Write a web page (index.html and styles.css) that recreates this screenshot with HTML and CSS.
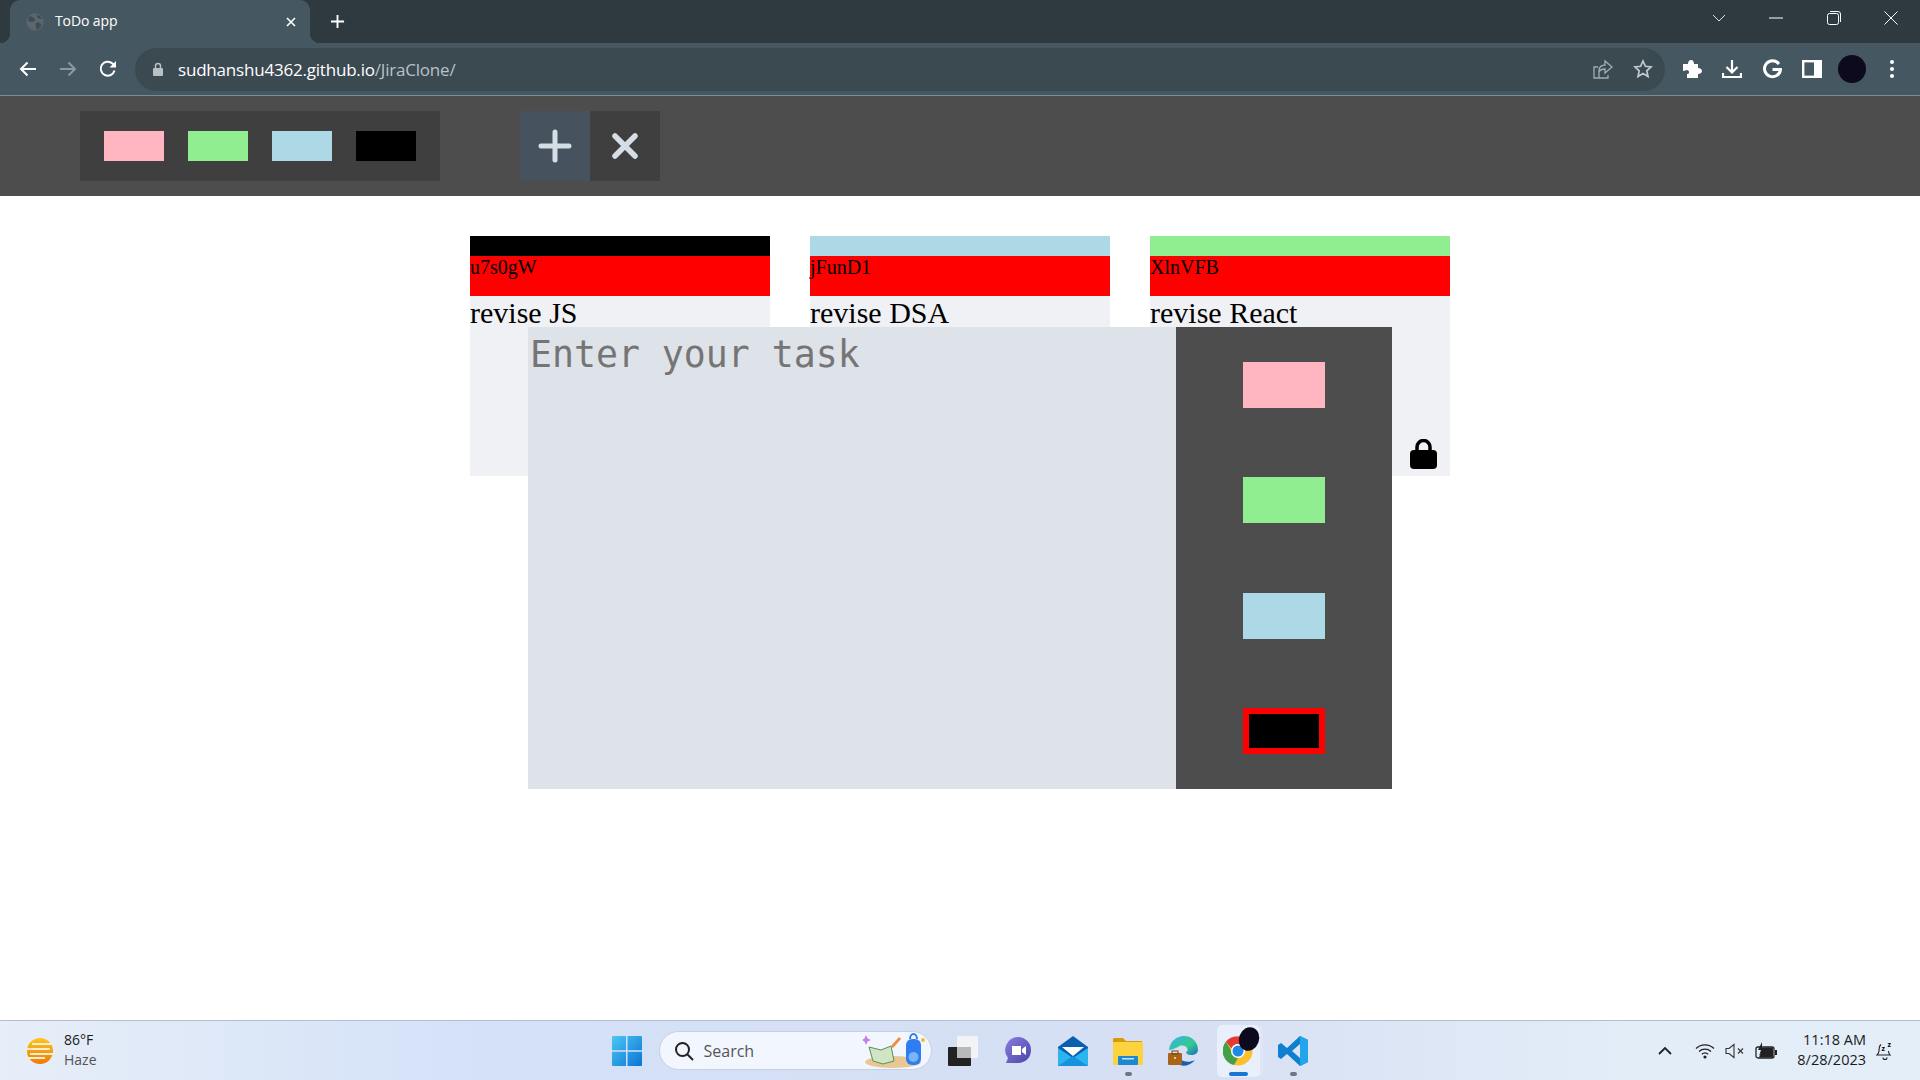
FILE: index.html
```html
<!DOCTYPE html>
<html lang="en">
  <head>
    <meta charset="UTF-8" />
    <meta name="viewport" content="width=device-width, initial-scale=1.0" />
    <title>ToDo app</title>
    <link rel="stylesheet" href="styles.css">
  </head>
  <body>
    <!-- Browser chrome -->
    <div class="tab-strip">
      <div class="tab">
        <svg class="favicon" viewBox="0 0 18 18"><circle cx="9" cy="9" r="8.5" fill="#5b676e"/><path d="M4 3c2 1 4 1 5 3S7 9 5 9 2 7 2 6zM10 10c2-1 4 0 5 1s-1 4-3 5-2-1-2-2-1-3 0-4zM11 2c2 0 4 2 5 4-2 0-3 0-4-1s-2-2-1-3z" fill="#3f4c54"/></svg>
        <span class="tab-title">ToDo app</span>
        <svg class="tab-close" viewBox="0 0 12 12"><path d="M2 2l8 8M10 2l-8 8" stroke="#fff" stroke-width="1.6"/></svg>
      </div>
      <svg class="new-tab" viewBox="0 0 16 16"><path d="M8 1v14M1 8h14" stroke="#fff" stroke-width="2"/></svg>
      <div class="window-controls">
        <span class="win-btn"><svg viewBox="0 0 14 8" width="14" height="8"><path d="M1 1l6 6 6-6" fill="none" stroke="#dfe3e5"/></svg></span>
        <span class="win-btn"><svg viewBox="0 0 14 2" width="14" height="2"><path d="M0 1h14" stroke="#fff"/></svg></span>
        <span class="win-btn"><svg viewBox="0 0 14 14" width="14" height="14"><rect x=".5" y="2.5" width="11" height="11" rx="2" fill="none" stroke="#fff"/><path d="M3 .5h8a2.500 2.500 0 0 1 2.500 2.500v8" fill="none" stroke="#fff"/></svg></span>
        <span class="win-btn"><svg viewBox="0 0 14 14" width="14" height="14"><path d="M.5.5l13 13M13.500.5l-13 13" stroke="#fff"/></svg></span>
      </div>
    </div>

    <div class="toolbar">
      <span class="tool-btn"><svg viewBox="0 0 18 16" width="18" height="16"><path d="M17 8H2M8.500 1.500L2 8l6.500 6.500" fill="none" stroke="#fff" stroke-width="2"/></svg></span>
      <span class="tool-btn"><svg viewBox="0 0 18 16" width="18" height="16"><path d="M1 8h15M9.500 1.500L16 8l-6.500 6.500" fill="none" stroke="#8b989f" stroke-width="2"/></svg></span>
      <span class="tool-btn"><svg viewBox="0 0 18 18" width="18" height="18"><path d="M15.500 10.500A7 7 0 1 1 13.500 3.500L16 6" fill="none" stroke="#fff" stroke-width="2"/><path d="M17 1v6.500h-6.500z" fill="#fff"/></svg></span>

      <div class="address-bar">
        <svg class="addr-lock" viewBox="0 0 12 14" width="12" height="14"><path d="M3.500 6V4a2.500 2.500 0 0 1 5 0v2" fill="none" stroke="#b9c0c4" stroke-width="1.500"/><rect x="1" y="6" width="10" height="8" rx="1" fill="#b9c0c4"/></svg>
        <span class="url"><span class="url-host">sudhanshu4362.github.io</span>/JiraClone/</span>
        <span class="addr-icon share"><svg viewBox="0 0 20 20" width="20" height="20"><path d="M6 19V11c0-3 3-5 6-5V2l7 6-7 6v-4c-3 0-5 1-6 3" fill="none" stroke="#a3acb1" stroke-width="1.300"/><path d="M5 8H1v11h14v-3" fill="none" stroke="#a3acb1" stroke-width="1.300"/></svg></span>
        <span class="addr-icon"><svg viewBox="0 0 20 20" width="20" height="20"><path d="M10 2l2.400 5.300 5.600.6-4.200 3.900 1.200 5.700L10 14.600 5 17.500l1.200-5.700L2 7.900l5.600-.6z" fill="none" stroke="#c3c9cc" stroke-width="1.700"/></svg></span>
      </div>

      <span class="tool-btn"><svg viewBox="0 0 20 20" width="20" height="20"><path d="M1 5h5c0-2 1-4 3-4s3 2 3 4h4v4c2 0 4 1 4 3s-2 3-4 3v4H5v-4c2 0 2-1 2-2s-1-2-2-2-2 1-4 1z" fill="#fff"/></svg></span>
      <span class="tool-btn"><svg viewBox="0 0 20 20" width="20" height="20"><path d="M10 1v12M4.500 8L10 13.500 15.500 8" fill="none" stroke="#fff" stroke-width="2.200"/><path d="M1 14v4h18v-4" fill="none" stroke="#fff" stroke-width="2.200"/></svg></span>
      <span class="tool-btn"><svg viewBox="0 0 20 20" width="20" height="20"><path d="M17 5a8 8 0 1 0 1.500 5.500H10.500" fill="none" stroke="#fff" stroke-width="3"/></svg></span>
      <span class="tool-btn"><svg viewBox="0 0 20 18" width="20" height="18"><rect x="1.200" y="1.200" width="17.600" height="15.600" fill="none" stroke="#fff" stroke-width="2.400"/><rect x="12" y="1" width="7" height="16" fill="#fff"/></svg></span>
      <span class="tool-btn"><span class="avatar"></span></span>
      <span class="tool-btn"><svg viewBox="0 0 6 20" width="6" height="20"><circle cx="3" cy="3" r="2" fill="#fff"/><circle cx="3" cy="10" r="2" fill="#fff"/><circle cx="3" cy="17" r="2" fill="#fff"/></svg></span>
    </div>

    <!-- The app -->
    <div class="page">
      <div class="app-header">
        <div class="palette">
          <div class="swatch pink"></div>
          <div class="swatch green"></div>
          <div class="swatch blue"></div>
          <div class="swatch black"></div>
        </div>
        <div class="actions">
          <div class="action add">
            <svg viewBox="0 0 34 34" width="34" height="34"><path d="M17 3v28M3 17h28" stroke="#d5dde5" stroke-width="5" stroke-linecap="round"/></svg>
          </div>
          <div class="action remove">
            <svg viewBox="0 0 28 28" width="28" height="28"><path d="M4 4l20 20M24 4L4 24" stroke="#d5dde5" stroke-width="5.500" stroke-linecap="round"/></svg>
          </div>
        </div>
      </div>

      <div class="tickets">
        <div class="ticket">
          <div class="ticket-color black"></div>
          <div class="ticket-id">u7s0gW</div>
          <div class="ticket-task">revise JS</div>
          <svg class="lock" viewBox="0 0 27 30" width="27" height="30"><path d="M7 14V8a6.500 6.500 0 0 1 13 0v6" fill="none" stroke="#000" stroke-width="3.500"/><rect y="11" width="27" height="19" rx="4"/></svg>
        </div>
        <div class="ticket">
          <div class="ticket-color blue"></div>
          <div class="ticket-id">jFunD1</div>
          <div class="ticket-task">revise DSA</div>
          <svg class="lock" viewBox="0 0 27 30" width="27" height="30"><path d="M7 14V8a6.500 6.500 0 0 1 13 0v6" fill="none" stroke="#000" stroke-width="3.500"/><rect y="11" width="27" height="19" rx="4"/></svg>
        </div>
        <div class="ticket">
          <div class="ticket-color green"></div>
          <div class="ticket-id">XlnVFB</div>
          <div class="ticket-task">revise React</div>
          <svg class="lock" viewBox="0 0 27 30" width="27" height="30"><path d="M7 14V8a6.500 6.500 0 0 1 13 0v6" fill="none" stroke="#000" stroke-width="3.500"/><rect y="11" width="27" height="19" rx="4"/></svg>
        </div>
      </div>

      <div class="modal">
        <textarea class="modal-input" placeholder="Enter your task"></textarea>
        <div class="modal-colors">
          <div class="modal-swatch pink"></div>
          <div class="modal-swatch green"></div>
          <div class="modal-swatch blue"></div>
          <div class="modal-swatch black active"></div>
        </div>
      </div>
    </div>

    <!-- Windows taskbar -->
    <div class="taskbar">
      <div class="weather">
        <svg viewBox="0 0 32 28" width="32" height="28">
          <defs><linearGradient id="sun" x1="0" y1="0" x2="0" y2="1"><stop offset="0" stop-color="#fdc51f"/><stop offset="1" stop-color="#ee7a06"/></linearGradient></defs>
          <circle cx="16" cy="14" r="13" fill="url(#sun)"/>
          <path d="M8 7h22M2 12h24M6 17h24M1 21h20" stroke="#f6ecd0" stroke-width="2"/>
        </svg>
        <div class="weather-text">
          <div class="temp">86°F</div>
          <div class="sky">Haze</div>
        </div>
      </div>

      <div class="task-icons">
        <svg class="start" viewBox="0 0 30 30" width="30" height="30">
          <defs><linearGradient id="win" x1="0" y1="0" x2="1" y2="1"><stop offset="0" stop-color="#4cc6f5"/><stop offset="1" stop-color="#0a74d4"/></linearGradient></defs>
          <path d="M0 1a1 1 0 0 1 1-1h13v14.300H0zM15.500 0H29a1 1 0 0 1 1 1v13.300H15.500zM0 15.700h14V30H1a1 1 0 0 1-1-1zM15.500 15.700H30V29a1 1 0 0 1-1 1H15.500z" fill="url(#win)"/>
        </svg>
        <div class="search">
          <svg viewBox="0 0 20 20" width="20" height="20"><circle cx="8.500" cy="8.500" r="6.500" fill="none" stroke="#222" stroke-width="2"/><path d="M13 13l6 6" stroke="#222" stroke-width="2"/></svg>
          <span class="search-text">Search</span>
          <svg class="search-art" viewBox="0 0 62 36" width="62" height="36">
            <ellipse cx="30" cy="29" rx="28" ry="6" fill="#e8c794"/>
            <path d="M6 14l12 3 10-4 3 15-11 3-10-3z" fill="#cfe5c4" stroke="#5c8f58"/>
            <path d="M28 13l8-9 2 2-8 9z" fill="#f08a3c"/>
            <rect x="43" y="6" width="15" height="26" rx="6" fill="#2f7df0"/>
            <path d="M47 6a3.500 5 0 0 1 7 0" fill="none" stroke="#2f7df0" stroke-width="2"/>
            <ellipse cx="50.500" cy="24" rx="5" ry="5" fill="#79b6f7"/>
            <path d="M3 2l1.500 3.500L8 7 4.500 8.500 3 12 1.500 8.500-2 7l3.500-1.500z" fill="#c77ae8"/>
            <circle cx="60" cy="7" r="2" fill="#f6b73c"/>
          </svg>
        </div>
        <span class="app">
          <svg viewBox="0 0 30 30" width="30" height="30"><rect y="11" width="23" height="19" rx="1" fill="#222"/><rect x="9" y="0" width="21" height="22" rx="1" fill="#f1f3f6"/><rect x="9" y="11" width="14" height="11" fill="#b9b9b9"/></svg>
        </span>
        <span class="app">
          <svg viewBox="0 0 30 30" width="30" height="30"><defs><linearGradient id="chat" x1="0" y1="0" x2="1" y2="1"><stop offset="0" stop-color="#8a7ce0"/><stop offset="1" stop-color="#4a46a8"/></linearGradient></defs><path d="M15 1a13 13 0 0 1 13 13c0 8-6 13-13 13H3l2-5a13 13 0 0 1 10-21z" fill="url(#chat)"/><path d="M9 10h9v9H9zM19 13l4-3v9l-4-3z" fill="#fff"/></svg>
        </span>
        <span class="app">
          <svg viewBox="0 0 30 30" width="30" height="30"><path d="M0 11L15 0l15 11v19H0z" fill="#0a5fae"/><path d="M4 11h22L15 20z" fill="#fff"/><path d="M0 12l15 10 15-10v18H0z" fill="#2bb4ef"/><path d="M0 30l15-10 15 10z" fill="#1792dc"/></svg>
        </span>
        <span class="app">
          <svg viewBox="0 0 30 30" width="30" height="30"><path d="M0 3a1 1 0 0 1 1-1h9l3 3h16v6H0z" fill="#d99a0a"/><rect y="6" width="30" height="23" rx="1" fill="#fbd33f"/><rect x="5" y="20" width="20" height="9" rx="1" fill="#1f86d0"/><rect x="9" y="22" width="12" height="1.500" fill="#bfe3fa"/></svg>
          <i class="app-dot"></i>
        </span>
        <span class="app">
          <svg viewBox="0 0 30 30" width="30" height="30"><defs><linearGradient id="edge" x1="0" y1="0" x2="1" y2="1"><stop offset="0" stop-color="#2fb6e8"/><stop offset=".6" stop-color="#35c98e"/><stop offset="1" stop-color="#1a6fc4"/></linearGradient></defs><path d="M1 14C2 5 9 0 16 0c8 0 14 6 14 14 0 3-3 5-7 5-3 0-5-1-5-3 2-1 2-2 1-4-2-3-6-3-9-1-4 2-7 3-9 3z" fill="url(#edge)"/><path d="M12 29c4 2 11 0 15-5-6 3-11 2-15-1z" fill="#1a5fb0"/><rect y="17" width="14" height="12" rx="1" fill="#a8651a"/><rect x="4" y="15" width="6" height="3" fill="none" stroke="#7a4510"/><rect x="6" y="21" width="2" height="2" fill="#f4c27a"/></svg>
        </span>
        <span class="app app-active">
          <span class="chrome">
            <svg viewBox="0 0 30 30" width="30" height="30"><circle cx="15" cy="15" r="14.500" fill="#fbc02d"/><path d="M15 .5A14.500 14.500 0 0 1 27.600 8H15a7 7 0 0 0-6.500 4.500L3 5.500A14.500 14.500 0 0 1 15 .5z" fill="#e53935"/><path d="M3 5.500l6 10.500a7 7 0 0 0 6 6L11 29A14.500 14.500 0 0 1 3 5.500z" fill="#43a047"/><circle cx="15" cy="15" r="7" fill="#fff"/><circle cx="15" cy="15" r="5.500" fill="#1e88e5"/></svg>
            <i class="chrome-avatar"></i>
          </span>
          <i class="app-bar"></i>
        </span>
        <span class="app">
          <svg viewBox="0 0 30 30" width="30" height="30"><path d="M22 0l8 4v22l-8 4-13-12-6 5-3-2V9l3-2 6 5zM22 8l-8 7 8 7z" fill="#0f7fd0"/><path d="M22 0l8 4v22l-8 4z" fill="#22a5ec"/></svg>
          <i class="app-dot"></i>
        </span>
      </div>

      <div class="tray">
        <svg class="tray-icon tray-up" viewBox="0 0 16 10" width="16" height="10"><path d="M2 8l6-6 6 6" fill="none" stroke="#222" stroke-width="1.800"/></svg>
        <svg class="tray-icon" viewBox="0 0 20 16" width="20" height="16"><path d="M1 5.500a13 13 0 0 1 18 0M4 8.500a9 9 0 0 1 12 0M6.800 11.200a5 5 0 0 1 6.400 0" fill="none" stroke="#222" stroke-width="1.300"/><circle cx="10" cy="14" r="1.600" fill="#222"/></svg>
        <svg class="tray-icon" viewBox="0 0 20 16" width="20" height="16"><path d="M1 5.500h3L9 1.500v13L4 10.500H1z" fill="none" stroke="#333" stroke-width="1.100"/><path d="M13 5.500l5 5M18 5.500l-5 5" stroke="#333" stroke-width="1.100"/></svg>
        <svg class="tray-icon battery" viewBox="0 0 22 18" width="22" height="18"><path d="M3 5h14a2 2 0 0 1 2 2v7a2 2 0 0 1-2 2H3a2 2 0 0 1-2-2V7a2 2 0 0 1 2-2z" fill="none" stroke="#222" stroke-width="1.300"/><path d="M8 5.500h9a1 1 0 0 1 1 1v8a1 1 0 0 1-1 1H4z" fill="#222"/><rect x="20" y="8" width="2" height="5" fill="#222"/><path d="M7 0L3 8h3l-2 6 6-8H7z" fill="#222"/></svg>
        <div class="clock">
          <div>11:18 AM</div>
          <div>8/28/2023</div>
        </div>
        <svg class="bell" viewBox="0 0 18 20" width="18" height="20"><path d="M5 3.500C3 5 3 8 3 10c0 2-1 3-2 4h13c-1-1-1.500-2-1.500-4" fill="none" stroke="#222" stroke-width="1.100"/><path d="M7 16.500a2 2 0 0 0 4 0" fill="none" stroke="#222" stroke-width="1.100"/><text x="5.500" y="10" class="zz">z</text><text x="11.500" y="6" class="zz">z</text></svg>
      </div>
    </div>
  </body>
</html>
```

FILE: styles.css
```css
* {
  box-sizing: border-box;
}

html,
body {
  height: 100%;
}

body {
  margin: 0;
  display: flex;
  flex-direction: column;
  overflow: hidden;
  background-color: #fff;
  font-family: "Liberation Serif", "Times New Roman", serif;
}

/* browser chrome */
.tab-strip {
  height: 43px;
  flex: none;
  display: flex;
  align-items: center;
  padding-left: 10px;
  background-color: #2f3a40;
}

.tab {
  position: relative;
  width: 300px;
  height: 43px;
  display: flex;
  align-items: center;
  padding: 0 13px 0 16px;
  background-color: #455862;
  border-radius: 10px 10px 0 0;
  color: #fff;
}

.tab::before,
.tab::after {
  content: "";
  position: absolute;
  bottom: 0;
  width: 10px;
  height: 10px;
}

.tab::before {
  left: -10px;
  background: radial-gradient(circle at 0 0, #2f3a40 10px, #455862 10.5px);
}

.tab::after {
  right: -10px;
  background: radial-gradient(circle at 100% 0, #2f3a40 10px, #455862 10.5px);
}

.favicon {
  width: 18px;
  height: 18px;
}

.tab-title {
  flex: 1;
  margin-left: 11px;
  padding-bottom: 2px;
  font-family: "Open Sans", sans-serif;
  font-size: 14px;
  letter-spacing: -0.1px;
}

.tab-close {
  width: 12px;
  height: 12px;
}

.new-tab {
  width: 15px;
  height: 15px;
  margin-left: 20px;
}

.window-controls {
  margin-left: auto;
  align-self: flex-start;
  display: flex;
}

.win-btn {
  width: 57.5px;
  height: 36px;
  display: flex;
  align-items: center;
  justify-content: center;
}

.toolbar {
  height: 53px;
  flex: none;
  display: flex;
  align-items: center;
  padding: 0 8px;
  background-color: #455862;
  border-bottom: 1px solid #7c8c95;
}

.tool-btn {
  width: 40px;
  height: 40px;
  flex: none;
  display: flex;
  align-items: center;
  justify-content: center;
}

.address-bar {
  flex: 1;
  height: 43px;
  margin: 0 7px;
  padding: 0 0 0 17px;
  display: flex;
  align-items: center;
  background-color: #3b4951;
  border-radius: 22px;
}

.url {
  flex: 1;
  margin-left: 14px;
  font-family: "Open Sans", sans-serif;
  font-size: 17px;
  letter-spacing: -0.2px;
  color: #b8c1c6;
}

.url-host {
  color: #fff;
}

.addr-icon {
  width: 40px;
  display: flex;
  justify-content: center;
}

.addr-icon:last-child {
  margin-right: 2px;
}

.avatar {
  width: 28px;
  height: 28px;
  border-radius: 50%;
  background-color: #0c0a1c;
}

/* app */
.page {
  position: relative;
  flex: 1;
  min-height: 0;
  background-color: #fff;
}

.app-header {
  height: 100px;
  display: flex;
  align-items: center;
  padding-left: 80px;
  background-color: #4d4d4d;
}

.palette {
  width: 360px;
  height: 70px;
  display: flex;
  align-items: center;
  justify-content: space-evenly;
  background-color: #3f3f3f;
}

.swatch {
  width: 60px;
  height: 30px;
}

.pink {
  background-color: lightpink;
}

.green {
  background-color: lightgreen;
}

.blue {
  background-color: lightblue;
}

.black {
  background-color: black;
}

.actions {
  display: flex;
  margin-left: 80px;
}

.action {
  width: 70px;
  height: 70px;
  display: flex;
  align-items: center;
  justify-content: center;
}

.add {
  background-color: #47525f;
}

.remove {
  background-color: #3f3f3f;
}

.tickets {
  display: flex;
  gap: 40px;
  padding: 40px 0 0 470px;
}

.ticket {
  width: 300px;
  height: 240px;
  display: flex;
  flex-direction: column;
  background-color: #f0f1f5;
}

.ticket-color {
  height: 20px;
}

.ticket-id {
  height: 40px;
  background-color: red;
  font-size: 20px;
  line-height: 23px;
}

.ticket-task {
  font-size: 30px;
  line-height: 34px;
}

.lock {
  margin: auto 13px 7px auto;
}

.modal {
  position: absolute;
  left: 528px;
  top: 231px;
  width: 864px;
  height: 462px;
  display: flex;
}

.modal-input {
  width: 648px;
  height: 100%;
  padding: 6px 2px 2px;
  border: none;
  outline: none;
  resize: none;
  background-color: #dee2e9;
  font-family: "DejaVu Sans Mono", monospace;
  font-size: 36.5px;
}

.modal-colors {
  width: 216px;
  display: flex;
  flex-direction: column;
  align-items: center;
  justify-content: space-around;
  background-color: #4d4d4d;
}

.modal-swatch {
  width: 82px;
  height: 46px;
}

.active {
  border: 6px solid red;
}

/* taskbar */
.taskbar {
  height: 60px;
  flex: none;
  display: grid;
  grid-template-columns: 1fr auto 1fr;
  align-items: center;
  background: linear-gradient(90deg, #e6eef8 0%, #d4e1f8 25%, #d6dff3 60%, #e3edf8 85%, #e4eef8 100%);
  border-top: 1px solid #b3bfd0;
  font-family: "Open Sans", sans-serif;
  color: #1b1b1b;
}

.weather {
  display: flex;
  align-items: center;
  gap: 8px;
  padding-left: 24px;
}

.weather-text {
  font-size: 14px;
  line-height: 20px;
  margin-top: -2px;
}

.sky {
  color: #555;
}

.task-icons {
  display: flex;
  align-items: center;
  height: 100%;
  padding-left: 12px;
}

.search {
  width: 273px;
  height: 39px;
  margin: 0 4px 0 17px;
  padding: 0 6px 0 14px;
  display: flex;
  align-items: center;
  background-color: #f2f6fe;
  border: 1px solid #c6d0e2;
  border-radius: 20px;
}

.search-text {
  flex: 1;
  margin-left: 10px;
  font-size: 16px;
  color: #555;
}

.app {
  position: relative;
  width: 55px;
  height: 52px;
  display: flex;
  align-items: center;
  justify-content: center;
}

.app-active {
  background-color: #eaf0fb;
  border-radius: 5px;
  width: 43px;
  margin: 0 6px;
  box-shadow: 4px 0 0 -1px #dfe7f6;
}

.chrome {
  position: relative;
  display: flex;
}

.chrome-avatar {
  position: absolute;
  top: -9px;
  right: -6px;
  width: 20px;
  height: 24px;
  border-radius: 50%;
  background-color: #0c0a1c;
  transform: rotate(20deg);
}

.app-dot {
  position: absolute;
  bottom: 1px;
  left: 50%;
  width: 7px;
  height: 4px;
  margin-left: -3px;
  border-radius: 2px;
  background-color: #6e7680;
}

.app-bar {
  position: absolute;
  bottom: 1px;
  left: 50%;
  width: 19px;
  height: 4px;
  margin-left: -9px;
  border-radius: 2px;
  background-color: #1a76d2;
}

.tray {
  display: flex;
  align-items: center;
  justify-content: flex-end;
  padding-right: 26px;
}

.tray-icon {
  margin-right: 10px;
}

.tray-up {
  margin-right: 22px;
}

.battery {
  margin-right: 0;
}

.clock {
  width: 80px;
  margin: -2px 10px 0 9px;
  text-align: right;
  white-space: nowrap;
  font-size: 14.5px;
  line-height: 20px;
}

.zz {
  font-family: "Open Sans", sans-serif;
  font-size: 7px;
  font-weight: 700;
}
```
